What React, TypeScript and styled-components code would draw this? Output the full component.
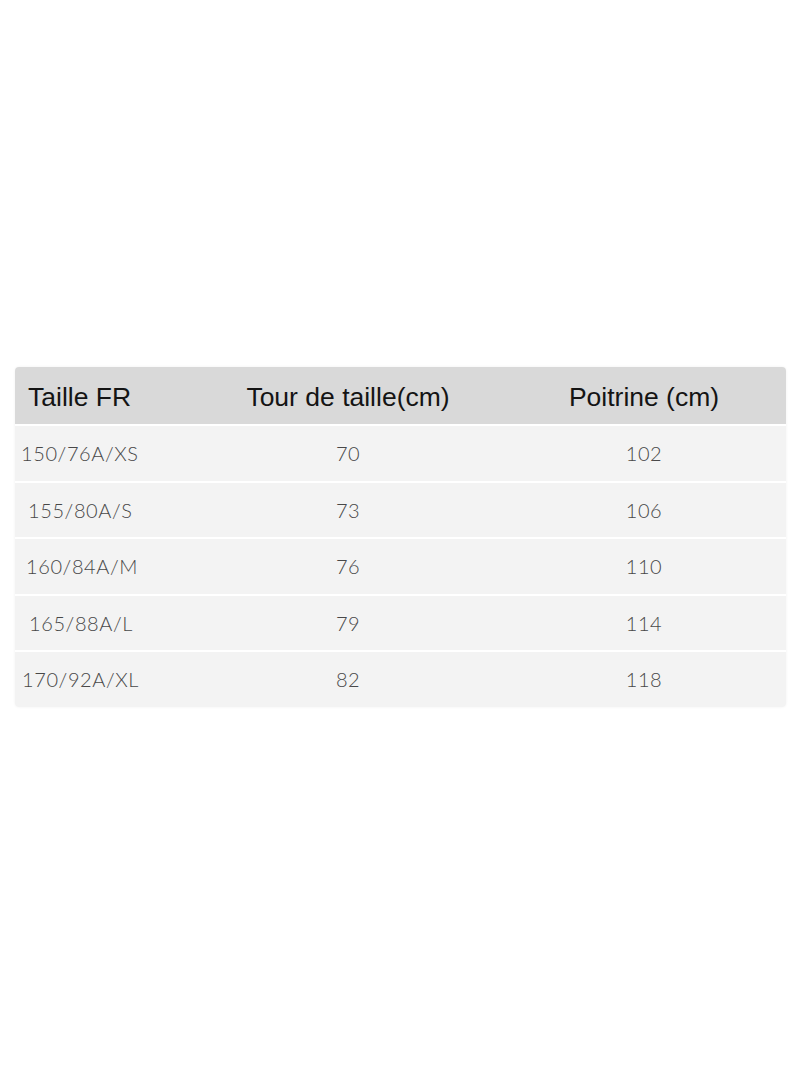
import React from 'react';
import styled, { createGlobalStyle } from 'styled-components';

const GlobalStyle = createGlobalStyle`
  html, body {
    margin: 0;
    padding: 0;
    background: #ffffff;
  }
`;

const Page = styled.div`
  width: 800px;
  height: 1065px;
  display: flex;
  align-items: flex-start;
  padding: 367px 14px 0 15px;
  box-sizing: border-box;
`;

const Table = styled.div`
  width: 100%;
  display: flex;
  flex-direction: column;
  gap: 2px;
  border-radius: 4px;
  overflow: hidden;
  box-shadow: 0 0 3px rgba(0, 0, 0, 0.06);
`;

// third column is nudged right a little, like the source image
const Row = styled.div<{ $head?: boolean }>`
  display: grid;
  grid-template-columns: 185px 296px 1fr;
  align-items: center;
  height: ${(p) => (p.$head ? '57px' : '54.5px')};
  background: ${(p) => (p.$head ? '#d9d9d9' : '#f3f3f3')};

  & > :last-child {
    padding-left: 6px;
  }
`;

const HeadCell = styled.div<{ $left?: boolean }>`
  font-family: 'Liberation Sans', Arial, sans-serif;
  font-size: 26.5px;
  color: #141414;
  text-align: ${(p) => (p.$left ? 'left' : 'center')};
  padding-left: ${(p) => (p.$left ? '13px' : '0')};
  padding-top: 3px;
`;

const SizeCell = styled.div<{ $indent: number }>`
  font-family: Lato, 'Open Sans', sans-serif;
  font-weight: 300;
  font-size: 20px;
  letter-spacing: 0.6px;
  color: #484848;
  padding-left: ${(p) => p.$indent}px;
`;

const NumCell = styled.div`
  font-family: Lato, 'Open Sans', sans-serif;
  font-weight: 300;
  font-size: 20px;
  letter-spacing: 0.5px;
  color: #484848;
  text-align: center;
`;

const rows = [
  { size: '150/76A/XS', waist: 70, chest: 102, indent: 6 },
  { size: '155/80A/S', waist: 73, chest: 106, indent: 13 },
  { size: '160/84A/M', waist: 76, chest: 110, indent: 11 },
  { size: '165/88A/L', waist: 79, chest: 114, indent: 14 },
  { size: '170/92A/XL', waist: 82, chest: 118, indent: 7 },
];

export default function App() {
  return (
    <>
      <GlobalStyle />
      <Page>
        <Table>
          <Row $head>
            <HeadCell $left>Taille FR</HeadCell>
            <HeadCell>Tour de taille(cm)</HeadCell>
            <HeadCell>Poitrine (cm)</HeadCell>
          </Row>
          {rows.map((r) => (
            <Row key={r.size}>
              <SizeCell $indent={r.indent}>{r.size}</SizeCell>
              <NumCell>{r.waist}</NumCell>
              <NumCell>{r.chest}</NumCell>
            </Row>
          ))}
        </Table>
      </Page>
    </>
  );
}
